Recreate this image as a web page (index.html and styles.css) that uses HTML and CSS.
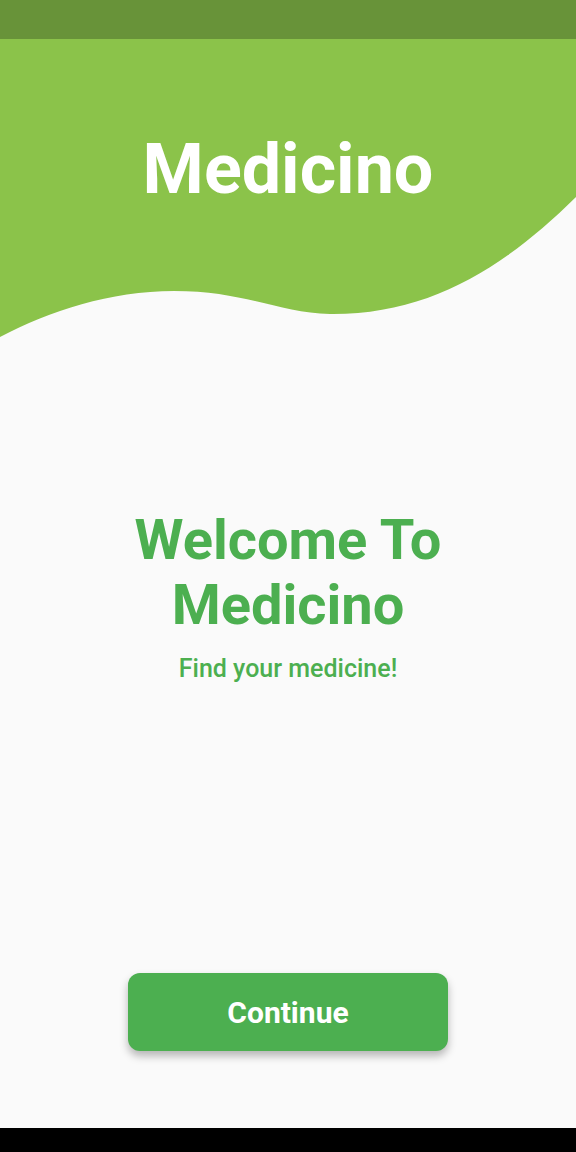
FILE: index.html
```html
<!DOCTYPE html>
<html>
<head>
<meta charset="utf-8">
<link rel="stylesheet" href="styles.css">
</head>
<body>
<div class="screen">
  <div class="status-bar"></div>
  <header class="hero">
    <svg class="hero-bg" viewBox="0 0 576 301" preserveAspectRatio="none" aria-hidden="true">
      <path d="M0 0 H576 V158 C505 228 430 276 330 275 C280 274 245 252 174 252 C110 252 50 272 0 298 Z" fill="#8BC34A"/>
    </svg>
    <h1 class="brand">Medicino</h1>
  </header>
  <main class="content">
    <h2 class="welcome">Welcome To<br>Medicino</h2>
    <p class="tagline">Find your medicine!</p>
    <div class="spacer"></div>
    <button class="continue">Continue</button>
  </main>
  <div class="nav-bar"></div>
</div>
</body>
</html>
```

FILE: styles.css
```css
* { box-sizing: border-box; }
html, body { margin: 0; padding: 0; }
body {
  background: #FAFAFA;
  font-family: Roboto, "Liberation Sans", Arial, sans-serif;
}
.screen {
  width: 576px;
  height: 1152px;
  display: flex;
  flex-direction: column;
  overflow: hidden;
}
.status-bar {
  height: 39px;
  flex: none;
  background: #689339;
}
.hero {
  position: relative;
  height: 301px;
  flex: none;
}
.hero-bg {
  position: absolute;
  inset: 0;
  width: 100%;
  height: 100%;
  display: block;
}
.brand {
  position: relative;
  margin: 0;
  padding-top: 89px;
  text-align: center;
  color: #FFFFFF;
  font-size: 70px;
  font-weight: 700;
  line-height: normal;
}
.content {
  flex: 1;
  display: flex;
  flex-direction: column;
  align-items: center;
}
.welcome {
  margin: 168px 0 0;
  text-align: center;
  color: #4CAF50;
  font-size: 56px;
  font-weight: 700;
  line-height: 65px;
}
.tagline {
  margin: 16px 0 0;
  color: #4CAF50;
  font-size: 25px;
  font-weight: 500;
  line-height: 29px;
}
.spacer { flex: 1; }
.continue {
  width: 320px;
  height: 78px;
  margin-bottom: 77px;
  border: none;
  border-radius: 12px;
  background: #4CAF50;
  color: #FFFFFF;
  font-family: inherit;
  font-size: 30px;
  font-weight: 700;
  box-shadow: 0 5px 8px rgba(0, 0, 0, 0.28);
}
.nav-bar {
  height: 24px;
  flex: none;
  background: #000000;
}
```
